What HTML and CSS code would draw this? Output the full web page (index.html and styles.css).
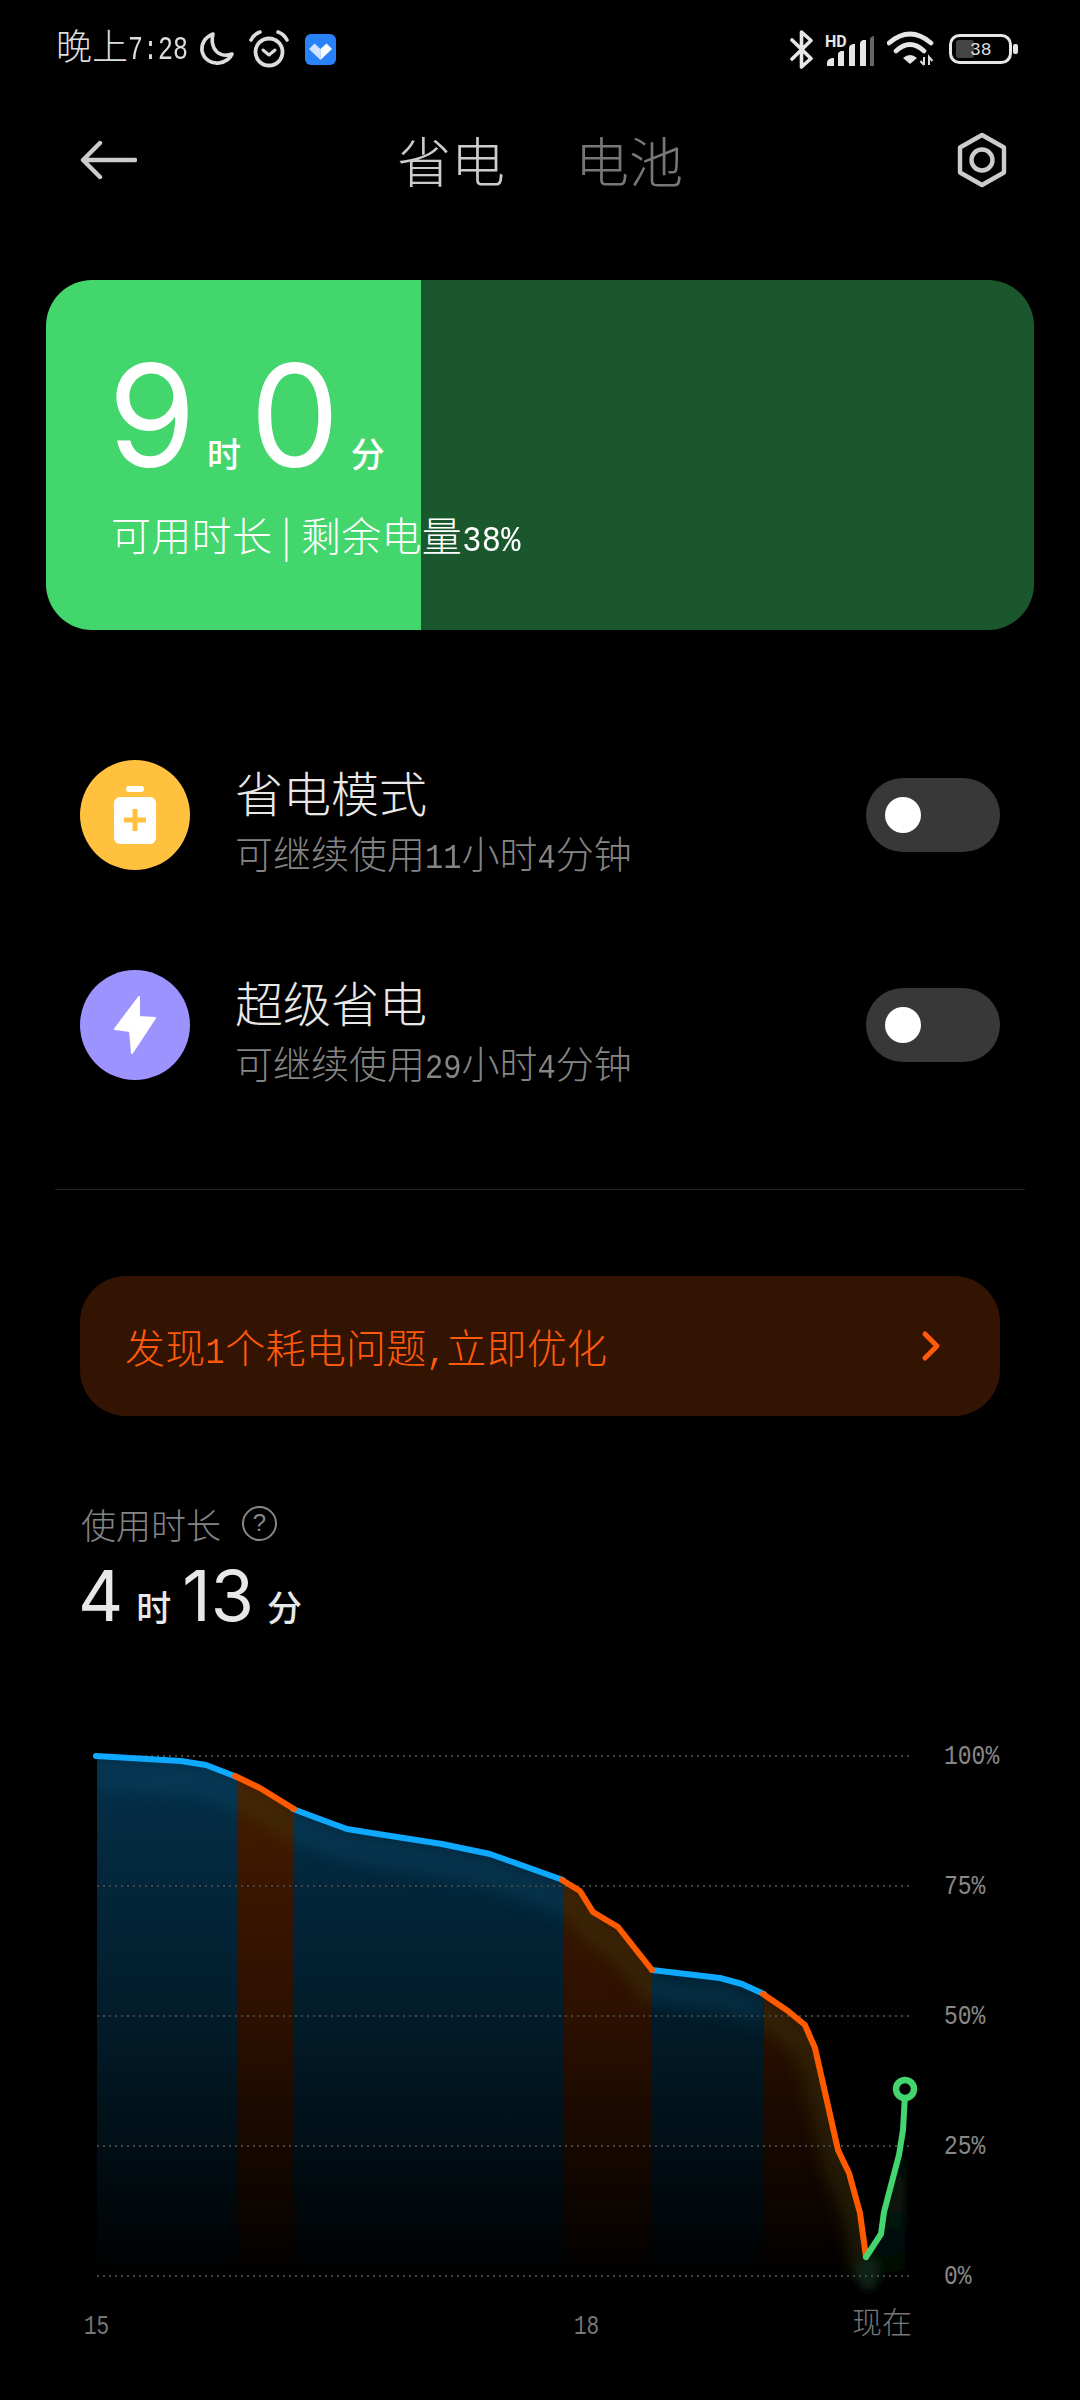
FILE: index.html
```html
<!DOCTYPE html>
<html lang="zh-CN">
<head>
  <meta charset="UTF-8">
  <title>省电</title>
  <link rel="stylesheet" href="styles.css">
</head>
<body>

  <!-- Status bar -->
  <div class="status">
    <div class="status-left">
      <span class="clock">晚上<span class="num">7:28</span></span>
      <svg class="ic-moon" width="36" height="36" viewBox="0 0 36 36"><path d="M14 3C6 6 2 13 3 20c2 9 10 13 17 12 6-1 11-4 13-9-8 3-15 0-18-6-3-6-2-10-1-14z" fill="none" stroke="#ddd" stroke-width="3.6" stroke-linejoin="round"/></svg>
      <svg class="ic-alarm" width="40" height="38" viewBox="0 0 40 38"><circle cx="20" cy="22" r="13.5" fill="none" stroke="#ddd" stroke-width="3.8"/><path d="M14 20l6 5 6-5" fill="none" stroke="#ddd" stroke-width="3" stroke-linecap="round" stroke-linejoin="round"/><path d="M2 10Q5 4 11 2M38 10Q35 4 29 2" fill="none" stroke="#ddd" stroke-width="3.6" stroke-linecap="round"/></svg>
      <svg class="ic-app" width="31" height="31" viewBox="0 0 31 31"><rect width="31" height="31" rx="6" fill="#2a82fb"/><path d="M15.5 26L4 15l5.500-5.500 6 5.500z" fill="#cfe5ff"/><path d="M15.500 26L27 15l-5.500-5.500-6 5.500z" fill="#fff"/></svg>
    </div>
    <div class="status-right">
      <svg width="25" height="39" viewBox="0 0 25 39"><path d="M3 10l19 18.500L12.500 37V2L22 10.500 3 29" fill="none" stroke="#e6e6e6" stroke-width="3.600" stroke-linecap="round" stroke-linejoin="round"/></svg>
      <svg class="ic-signal" width="50" height="37" viewBox="0 -4 50 37">
        <text class="hd" x="0" y="12">HD</text>
        <path d="M2 31v-3q0-4 5-5h2v8zM13 31V19q0-2 3-3h3v15zM24 31V13q0-3 4-4h2v22zM35 31V9q0-3 3-4h3v26z" fill="#e6e6e6"/>
        <path d="M45 31V4q0-2 4-3v30z" fill="#666"/>
      </svg>
      <svg class="ic-wifi" width="48" height="36" viewBox="0 0 48 36">
        <path d="M2 12Q23-6 44 12M9 20Q23 7 37 20" fill="none" stroke="#e6e6e6" stroke-width="4.600" stroke-linecap="round"/>
        <path d="M16 27Q23 21 30 27L23 33z" fill="#e6e6e6"/>
        <path d="M37 26v8M33.500 30l3.500 4M42 34v-8l3.500 4" fill="none" stroke="#ddd" stroke-width="2"/>
      </svg>
      <svg width="69" height="30" viewBox="0 0 69 30">
        <rect x="1.500" y="1.500" width="60" height="27" rx="9" fill="none" stroke="#e6e6e6" stroke-width="3"/>
        <rect x="7" y="6" width="18" height="18" rx="3" fill="#444"/>
        <text class="batt-num" x="21" y="21">38</text>
        <rect x="64" y="10" width="5" height="10" rx="2" fill="#e6e6e6"/>
      </svg>
    </div>
  </div>

  <!-- Title bar -->
  <div class="nav">
    <svg class="nav-back" width="57" height="40" viewBox="0 0 57 40"><path d="M55 20H3M20 3L3 20l17 17" fill="none" stroke="#ccc" stroke-width="4.400" stroke-linecap="round" stroke-linejoin="round"/></svg>
    <div class="tabs">
      <span class="tab active">省电</span>
      <span class="tab">电池</span>
    </div>
    <svg class="nav-gear" width="50" height="56" viewBox="0 0 50 56"><path d="M25 3l22 12.500v25L25 53 3 40.500v-25z" fill="none" stroke="#ccc" stroke-width="4.400" stroke-linejoin="round"/><circle cx="25" cy="28" r="10.500" fill="none" stroke="#ccc" stroke-width="4.400"/></svg>
  </div>

  <!-- Remaining time card -->
  <div class="card">
    <div class="time">
      <span class="time-big">9</span><span class="time-unit">时</span>
      <span class="time-big">0</span><span class="time-unit">分</span>
    </div>
    <div class="card-sub">可用时长 | 剩余电量<span class="num">38%</span></div>
  </div>

  <!-- Modes -->
  <div class="modes">
    <div class="mode">
      <div class="mode-icon amber">
        <svg width="42" height="58" viewBox="0 0 42 58"><rect x="12" width="18" height="6" rx="3" fill="#fff"/><rect y="11" width="42" height="47" rx="6" fill="#fff"/><path d="M21 23v22M10 34h22" stroke="#ffc13e" stroke-width="5"/></svg>
      </div>
      <div class="mode-text">
        <div class="mode-title">省电模式</div>
        <div class="mode-sub">可继续使用<span class="num">11</span>小时<span class="num">4</span>分钟</div>
      </div>
      <div class="toggle"><span class="knob"></span></div>
    </div>
    <div class="mode">
      <div class="mode-icon violet">
        <svg width="44" height="60" viewBox="0 0 44 60"><path d="M26 2L2 34l15 2 2 22 23-35-16-1z" fill="#fff" stroke="#fff" stroke-width="2" stroke-linejoin="round"/></svg>
      </div>
      <div class="mode-text">
        <div class="mode-title">超级省电</div>
        <div class="mode-sub">可继续使用<span class="num">29</span>小时<span class="num">4</span>分钟</div>
      </div>
      <div class="toggle"><span class="knob"></span></div>
    </div>
  </div>

  <div class="divider"></div>

  <!-- Optimise banner -->
  <div class="banner">
    <span>发现<span class="num">1</span>个耗电问题<span class="num">,</span>立即优化</span>
    <svg width="20" height="32" viewBox="0 0 20 32"><path d="M4 4l12 12L4 28" fill="none" stroke="#ff5a0a" stroke-width="5" stroke-linecap="round" stroke-linejoin="round"/></svg>
  </div>

  <!-- Usage -->
  <div class="usage">
    <div class="usage-head">使用时长 <span class="help">?</span></div>
    <div class="usage-time">
      <span class="usage-big">4</span><span class="usage-unit">时</span>
      <span class="usage-big">13</span><span class="usage-unit">分</span>
    </div>
  </div>

  <!-- Battery chart -->
  <svg class="chart" width="1080" height="640" viewBox="0 1720 1080 640">
    <defs>
      <linearGradient id="fillBlue" gradientUnits="userSpaceOnUse" x1="0" y1="1756" x2="0" y2="2280">
        <stop offset="0" stop-color="#04304a"/><stop offset=".5" stop-color="#021c2a"/><stop offset="1" stop-color="#000"/>
      </linearGradient>
      <linearGradient id="fillOrange" gradientUnits="userSpaceOnUse" x1="0" y1="1756" x2="0" y2="2280">
        <stop offset="0" stop-color="#481c00"/><stop offset=".5" stop-color="#2c1000"/><stop offset="1" stop-color="#000"/>
      </linearGradient>
      <linearGradient id="fillGreen" gradientUnits="userSpaceOnUse" x1="0" y1="2090" x2="0" y2="2300">
        <stop offset="0" stop-color="#000"/><stop offset=".5" stop-color="#081a0f"/><stop offset="1" stop-color="#000"/>
      </linearGradient>
      <filter id="blur" x="-20%" y="-50%" width="140%" height="200%"><feGaussianBlur stdDeviation="9"/></filter>
      <filter id="blurSmall" x="-50%" y="-50%" width="200%" height="200%"><feGaussianBlur stdDeviation="5"/></filter>
      <clipPath id="clipBlue">
        <polygon points="97,1756 181,1761 206,1765 237,1777 237,2280 97,2280"/>
        <polygon points="293,1809 317,1818 347,1829 378,1834 442,1844 490,1854 563,1880 563,2280 293,2280"/>
        <polygon points="652,1970 720,1978 742,1984 764,1994 764,2280 652,2280"/>
      </clipPath>
      <clipPath id="clipOrange">
        <polygon points="237,1777 260,1788 293,1809 293,2280 237,2280"/>
        <polygon points="563,1880 580,1891 593,1912 618,1927 652,1970 652,2280 563,2280"/>
        <polygon points="764,1994 788,2011 805,2025 815,2048 838,2150 849,2173 860,2213 866,2257 866,2280 764,2280"/>
      </clipPath>
    </defs>

    <g clip-path="url(#clipBlue)">
      <rect x="97" y="1756" width="667" height="524" fill="url(#fillBlue)"/>
      <polyline class="glow glow-blue" points="97,1776 181,1781 206,1785 237,1797 260,1808 293,1829 317,1838 347,1849 378,1854 442,1864 490,1874 563,1900 580,1911 593,1932 618,1947 652,1990 720,1998 742,2004 764,2014"/>
    </g>
    <g clip-path="url(#clipOrange)">
      <rect x="237" y="1756" width="629" height="524" fill="url(#fillOrange)"/>
      <polyline class="glow glow-orange" points="206,1785 237,1797 260,1808 293,1829 317,1838 547,1870 563,1900 580,1911 593,1932 618,1947 652,1990 720,1998 764,2014 788,2031 805,2045 815,2068 838,2170 849,2193 860,2233 866,2277"/>
    </g>
    <polygon points="866,2257 881,2234 884,2212 899,2155 903,2130 905,2090 905,2270 866,2280" fill="url(#fillGreen)" filter="url(#blurSmall)"/>
    <ellipse cx="868" cy="2272" rx="12" ry="18" fill="#0e2416" filter="url(#blurSmall)"/>

    <g class="grid">
      <line x1="97" y1="1756" x2="913" y2="1756"/>
      <line x1="97" y1="1886" x2="913" y2="1886"/>
      <line x1="97" y1="2016" x2="913" y2="2016"/>
      <line x1="97" y1="2146" x2="913" y2="2146"/>
      <line x1="97" y1="2276" x2="913" y2="2276"/>
    </g>

    <polyline class="line line-blue" points="96,1756 181,1761 206,1765 237,1777"/>
    <polyline class="line line-blue" points="293,1809 317,1818 347,1829 378,1834 442,1844 490,1854 563,1880"/>
    <polyline class="line line-blue" points="652,1970 720,1978 742,1984 764,1994"/>
    <polyline class="line line-orange" points="235,1776 260,1788 294,1809"/>
    <polyline class="line line-orange" points="562,1880 580,1891 593,1912 618,1927 652,1970"/>
    <polyline class="line line-orange" points="763,1994 788,2011 805,2025 815,2048 838,2150 849,2173 860,2213 866,2257"/>
    <polyline class="line line-green" points="866,2257 881,2234 884,2212 899,2155 903,2130 905,2095"/>
    <circle cx="905" cy="2089" r="9" fill="#000" stroke="#43d66e" stroke-width="6.500"/>

    <text class="axis" x="944" y="1763">100%</text>
    <text class="axis" x="944" y="1893">75%</text>
    <text class="axis" x="944" y="2023">50%</text>
    <text class="axis" x="944" y="2153">25%</text>
    <text class="axis" x="944" y="2283">0%</text>
    <text class="axis axis-x" x="84" y="2332">15</text>
    <text class="axis axis-x" x="574" y="2332">18</text>
    <text class="axis-now" x="852" y="2333">现在</text>
  </svg>

</body>
</html>
```

FILE: styles.css
```css
* {
  box-sizing: border-box;
}
html, body {
  margin: 0;
  background: #000;
}
body {
  width: 1080px;
  height: 2400px;
  overflow: hidden;
  font-family: "Noto Sans CJK SC", "Noto Sans", sans-serif;
  font-weight: 300;
  color: #e8e8e8;
}
.num {
  display: inline-block;
  font-family: "Liberation Mono", monospace;
  font-size: 0.8em;
  font-weight: 400;
  transform: scaleY(1.15);
  transform-origin: 50% 75%;
}

/* status bar */
.status {
  display: flex;
  justify-content: space-between;
  align-items: center;
  height: 40px;
  margin-top: 29px;
  padding: 0 62px 0 56px;
}
.status-left,
.status-right {
  display: flex;
  align-items: center;
}
.clock {
  font-size: 36px;
  line-height: 40px;
  color: #ddd;
  white-space: nowrap;
}
.clock .num {
  font-size: 25px;
  transform: scaleY(1.3);
}
.ic-moon {
  margin-left: 11px;
}
.ic-alarm {
  margin-left: 14px;
}
.ic-app {
  margin-left: 16px;
}
.ic-signal {
  margin-left: 11px;
}
.ic-wifi {
  margin-left: 12px;
}
.status-right svg:last-child {
  margin-left: 14px;
}
.hd {
  font-family: Roboto, sans-serif;
  font-size: 16px;
  font-weight: 700;
  fill: #e6e6e6;
}
.batt-num {
  font-family: "Liberation Mono", monospace;
  font-size: 18px;
  fill: #ddd;
}

/* title bar */
.nav {
  display: grid;
  grid-template-columns: 1fr auto 1fr;
  align-items: center;
  height: 60px;
  margin-top: 61px;
  padding: 0 73px;
}
.nav-back {
  margin-left: 7px;
}
.nav-gear {
  justify-self: end;
}
.tabs {
  display: flex;
  gap: 70px;
}
.tab {
  font-size: 54px;
  line-height: 60px;
  color: #777;
}
.tab.active {
  color: #ccc;
}

/* card */
.card {
  height: 350px;
  margin: 90px 46px 0;
  padding: 78px 0 0 62px;
  border-radius: 46px;
  background: linear-gradient(to right, #42d66d 375px, #1b572d 375px);
  color: #fff;
}
.time {
  display: flex;
  align-items: baseline;
}
.time-big {
  font-family: Inter, sans-serif;
  font-size: 142px;
  font-weight: 400;
  line-height: 115px;
}
.time-unit {
  margin: 0 9px 0 11px;
  font-size: 34px;
  font-weight: 500;
  line-height: 34px;
}
.card-sub {
  margin-top: 39px;
  margin-left: 3px;
  font-size: 40px;
  line-height: 44px;
  letter-spacing: 0.3px;
  white-space: nowrap;
}

/* modes */
.modes {
  display: flex;
  flex-direction: column;
  gap: 100px;
  margin-top: 130px;
  padding: 0 80px;
}
.mode {
  display: flex;
  align-items: center;
  height: 110px;
}
.mode-icon {
  display: flex;
  align-items: center;
  justify-content: center;
  width: 110px;
  height: 110px;
  border-radius: 50%;
}
.amber {
  background: #ffc13e;
}
.violet {
  background: #9d93ff;
}
.mode-text {
  flex: 1;
  align-self: flex-start;
  margin-left: 45px;
  padding-top: 4px;
}
.mode-title {
  font-size: 48px;
  line-height: 54px;
}
.mode-sub {
  margin-top: 12px;
  font-size: 38px;
  line-height: 44px;
  color: #858585;
}
.toggle {
  display: flex;
  align-items: center;
  width: 134px;
  height: 74px;
  padding-left: 19px;
  border-radius: 37px;
  background: #383838;
}
.knob {
  width: 36px;
  height: 36px;
  border-radius: 50%;
  background: #fff;
}
.divider {
  height: 1px;
  margin: 109px 55px 0;
  background: #252525;
}

/* banner */
.banner {
  display: flex;
  align-items: center;
  justify-content: space-between;
  height: 140px;
  margin: 86px 80px 0;
  padding: 0 59px 0 45px;
  border-radius: 46px;
  background: #331302;
  font-size: 40px;
  letter-spacing: 0.3px;
  color: #ff5a0a;
}

/* usage */
.usage {
  margin-top: 84px;
  padding-left: 78px;
}
.usage-head {
  display: flex;
  align-items: center;
  gap: 21px;
  height: 46px;
  margin-left: 3px;
  font-size: 35px;
  color: #858585;
}
.help {
  display: flex;
  align-items: center;
  justify-content: center;
  width: 35px;
  height: 35px;
  border: 2px solid #888;
  border-radius: 50%;
  font-family: "Liberation Sans", sans-serif;
  font-size: 24px;
  color: #888;
}
.usage-time {
  display: flex;
  align-items: baseline;
  margin-top: 22px;
}
.usage-big {
  font-family: Inter, sans-serif;
  font-size: 70px;
  font-weight: 400;
  line-height: 56px;
}
.usage-unit {
  margin: 0 11px 0 13px;
  font-size: 35px;
  font-weight: 500;
  line-height: 34px;
}

/* chart */
.chart {
  display: block;
  margin-top: 96px;
}
.grid line {
  stroke: #444;
  stroke-width: 2;
  stroke-dasharray: 2 4;
}
.line {
  fill: none;
  stroke-width: 6;
  stroke-linecap: round;
  stroke-linejoin: round;
}
.line-blue {
  stroke: #0fa9ff;
}
.line-orange {
  stroke: #ff5a00;
}
.line-green {
  stroke: #43d66e;
}
.glow {
  fill: none;
  stroke-width: 26;
  filter: url(#blur);
}
.glow-blue {
  stroke: #0a5275;
  opacity: 0.3;
}
.glow-orange {
  stroke: #3f3a10;
  opacity: 0.45;
}
.axis {
  font-family: "Liberation Mono", monospace;
  font-size: 23px;
  fill: #888;
  transform-box: fill-box;
  transform-origin: center;
  transform: scaleY(1.2);
}
.axis-x {
  font-size: 21px;
  fill: #777;
  transform: scaleY(1.3);
}
.axis-now {
  font-size: 30px;
  fill: #777;
}
```
